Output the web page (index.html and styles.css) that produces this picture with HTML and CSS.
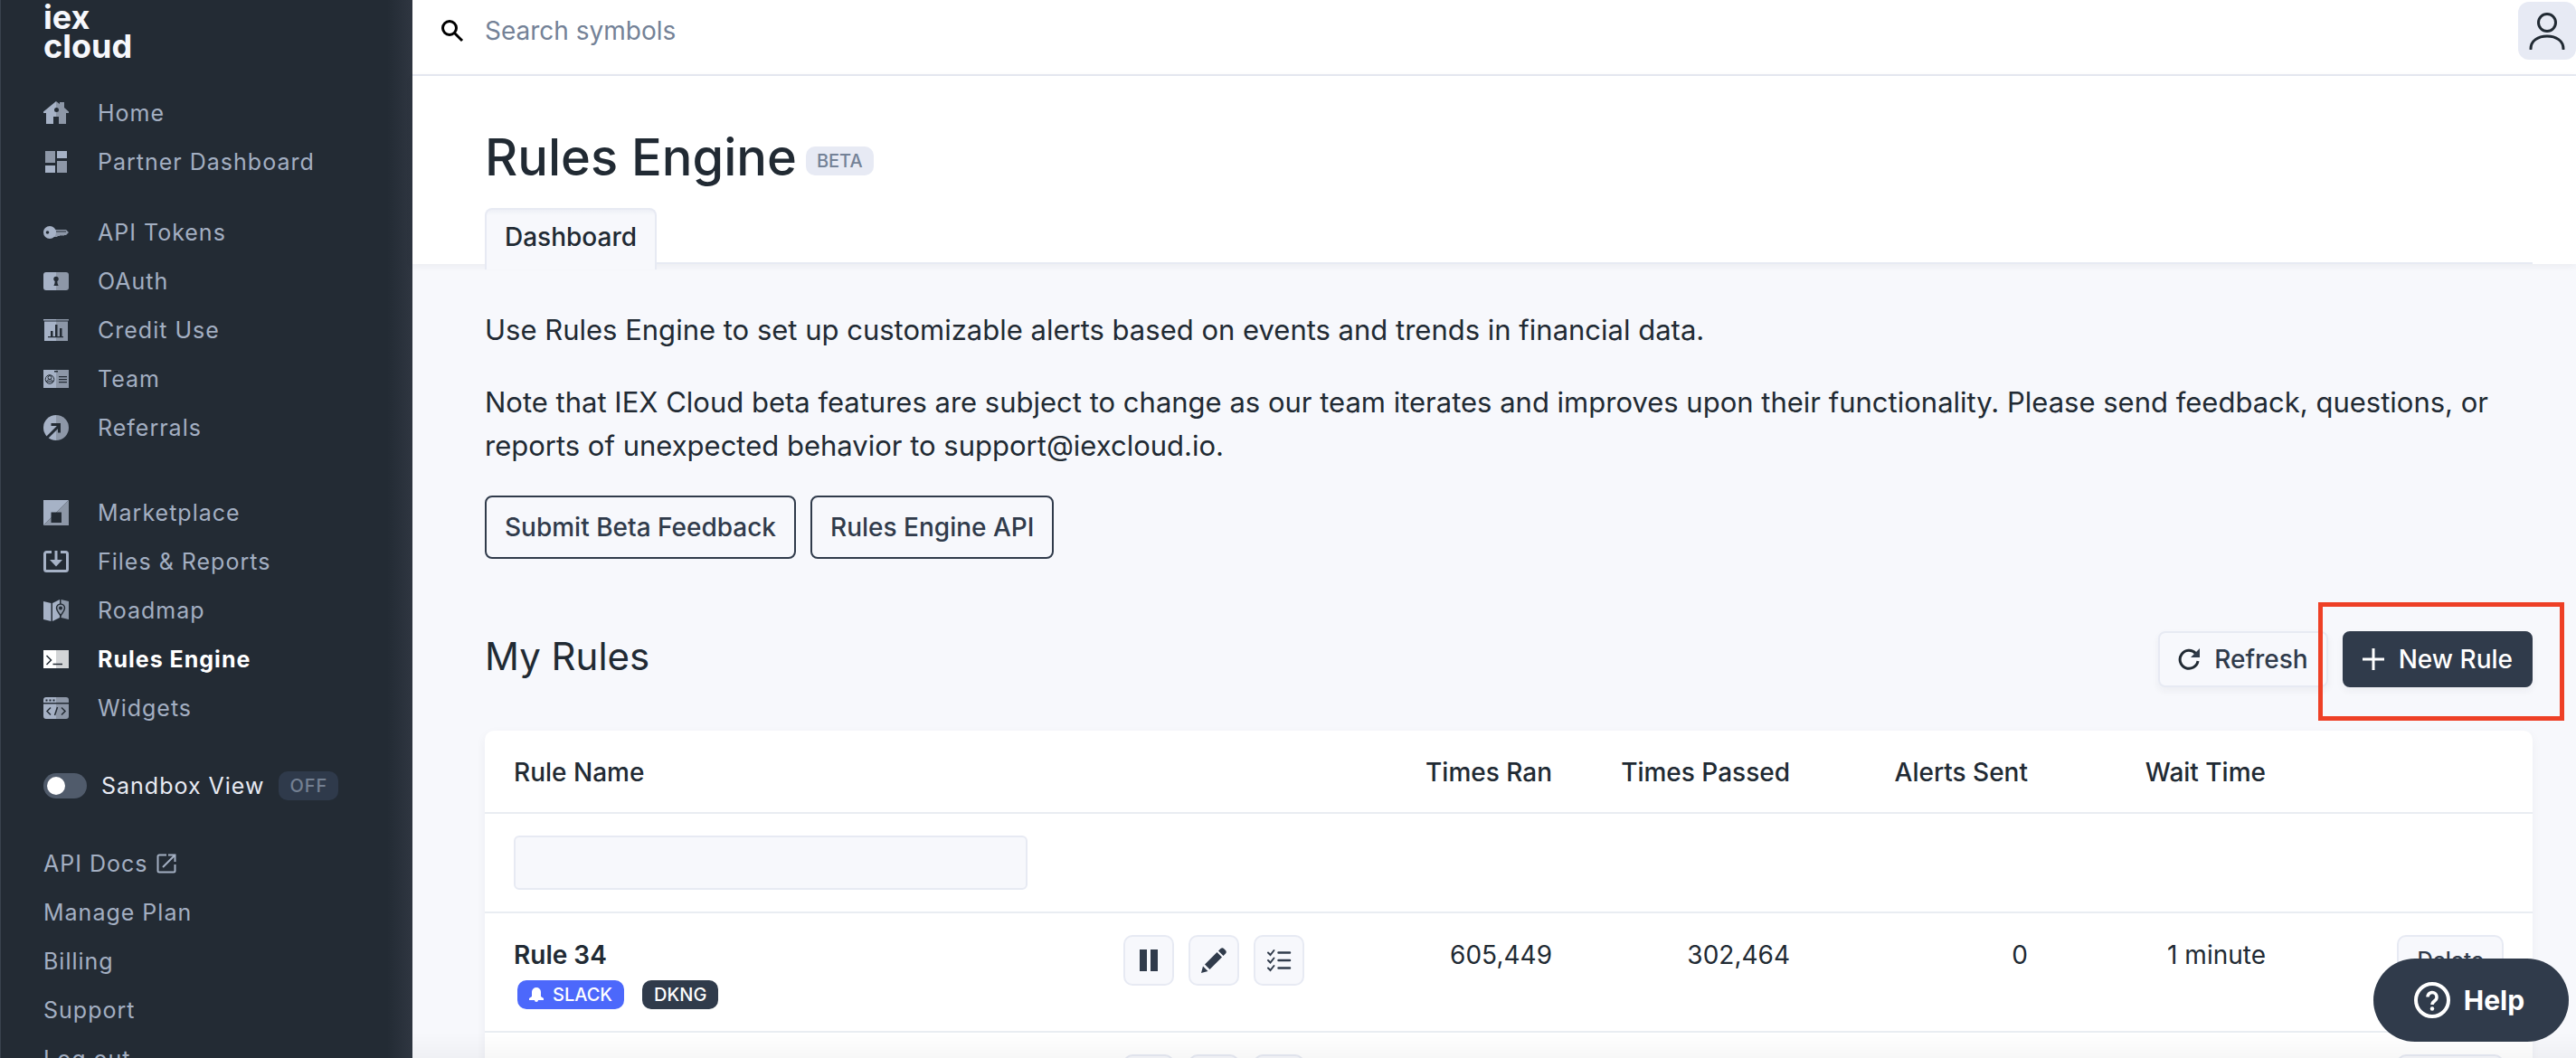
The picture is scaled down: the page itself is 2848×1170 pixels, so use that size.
FILE: index.html
```html
<!DOCTYPE html>
<html lang="en">
<head>
<meta charset="utf-8">
<title>Rules Engine - IEX Cloud</title>
<meta name="viewport" content="width=device-width, initial-scale=1">
<link rel="stylesheet" href="styles.css">
</head>
<body>
<div class="app">
  <aside class="sidebar">
    <a class="logo" href="#">iex<br>cloud</a>
    <nav class="nav" aria-label="Main">
      <ul class="nav-group">
        <li><a class="nav-link" href="#"><svg class="nav-icon" viewBox="0 0 28 28"><path class="tone-a" d="M14 1 0 12.500V14h3v12h8v-8h3z"/><path class="tone-b" d="M14 1l4 3V2h5v6l5 4.500V14h-3v12h-8v-8h-3z"/><circle class="cut" cx="14.500" cy="10.500" r="2.500"/></svg>Home</a></li>
        <li><a class="nav-link" href="#"><svg class="nav-icon" viewBox="0 0 28 28"><path class="tone-b" d="M2 2h11v13H2zM15 13h11v13H15z"/><path class="tone-a" d="M2 18h11v8H2zM15 2h11v8H15z"/></svg>Partner Dashboard</a></li>
      </ul>
      <ul class="nav-group">
        <li><a class="nav-link" href="#"><svg class="nav-icon" viewBox="0 0 28 28"><path class="tone-b" d="M12 11h13l3 3-3 3h-2l-1 1-1-1-1 1-1-1-1 1h-2l-1 1h-3z"/><circle class="tone-a" cx="7" cy="14" r="7"/><circle class="cut" cx="4.500" cy="14" r="1.800"/><path class="cut" d="M14 12.500h11v1H14z"/></svg>API Tokens</a></li>
        <li><a class="nav-link" href="#"><svg class="nav-icon" viewBox="0 0 28 28"><path class="tone-a" d="M14 4H3a3 3 0 0 0-3 3v14a3 3 0 0 0 3 3h11z"/><path class="tone-b" d="M14 4h11a3 3 0 0 1 3 3v14a3 3 0 0 1-3 3H14z"/><circle class="cut" cx="14" cy="11.500" r="2.700"/><path class="cut" d="M13 12h2l.600 4.500 1 2.500h-5.200l1-2.500z"/></svg>OAuth</a></li>
        <li><a class="nav-link" href="#"><svg class="nav-icon" viewBox="0 0 28 28"><path class="tone-a" d="M0 2h14v1.500H0zM1 4.500h13V26H1z"/><path class="tone-b" d="M14 2h14v1.500H14zM14 4.500h13V26H14z"/><path class="cut" d="M8 15h2.500v6H8zM13 8h2.500v13H13zM18 12h2.500v9H18zM5 21h17v1.200H5z"/></svg>Credit Use</a></li>
        <li><a class="nav-link" href="#"><svg class="nav-icon" viewBox="0 0 28 28"><path class="tone-a" d="M0 4h14v20H0z"/><path class="tone-b" d="M14 4h14v20H14z"/><path class="cut" d="M12 5h4v1.500h-4zM17 11h9v1.200h-9zM17 14h9v1.200h-9zM17 17h9v1.200h-9z"/><circle class="cut-line" cx="7" cy="14.500" r="4.800"/><circle class="cut-line" cx="7" cy="12.500" r="2"/><path class="cut-line" d="M3.500 17c0-3 7-3 7 0z"/></svg>Team</a></li>
        <li><a class="nav-link" href="#"><svg class="nav-icon" viewBox="0 0 28 28"><path class="tone-a" d="M14 0a14 14 0 0 0 0 28z"/><path class="tone-b" d="M14 0a14 14 0 0 1 0 28z"/><path class="cut-arrow" d="M4 25 17.500 11.500M8.500 10.500h9v9"/></svg>Referrals</a></li>
      </ul>
      <ul class="nav-group nav-group-wide">
        <li><a class="nav-link" href="#"><svg class="nav-icon" viewBox="0 0 28 28"><path class="tone-a" d="M0 0h28L0 28z"/><path class="tone-b" d="M28 0v28H0z"/><path class="cut" d="M8.500 13.500H20V25H8.500z"/></svg>Marketplace</a></li>
        <li><a class="nav-link" href="#"><svg class="nav-icon" viewBox="0 0 28 28"><path class="line-a" d="M9 3.500H3.500A2 2 0 0 0 1.500 5.500v17a2 2 0 0 0 2 2h21a2 2 0 0 0 2-2v-17a2 2 0 0 0-2-2H19M14 2v10"/><path class="tone-a" d="M7 12h14l-7 7.500z"/></svg>Files &amp; Reports</a></li>
        <li><a class="nav-link" href="#"><svg class="nav-icon" viewBox="0 0 28 28"><path class="tone-a" d="M0 4l8.500 2v20L0 24zM10 6l8-4v20l-8 4z"/><path class="tone-b" d="M19.500 2l8.500 2v20l-8.500-2z"/><path class="pin" d="M19 20c-2.500-4-4.500-6-4.500-8.500a4.500 4.500 0 0 1 9 0C23.500 14 21.500 16 19 20z"/><circle class="cut" cx="19" cy="11.500" r="2"/></svg>Roadmap</a></li>
        <li><a class="nav-link is-active" aria-current="page" href="#"><svg class="nav-icon" viewBox="0 0 28 28"><path class="tone-a" d="M0 4h14v20H0z"/><path class="tone-b" d="M14 4h14v20H14z"/><path class="cut-thick" d="M3.500 10l5 5-5 5M10.500 19.500H21"/></svg>Rules Engine</a></li>
        <li><a class="nav-link" href="#"><svg class="nav-icon" viewBox="0 0 28 28"><path class="tone-a" d="M14 2H3a3 3 0 0 0-3 3v3h14zM0 9.500h14V26H3a3 3 0 0 1-3-3z"/><path class="tone-b" d="M14 2h11a3 3 0 0 1 3 3v3H14zM14 9.500h14V23a3 3 0 0 1-3 3H14z"/><path class="cut" d="M2.500 4.500h2v2h-2zM6.500 4.500h2v2h-2zM10.500 4.500h2v2h-2z"/><path class="cut-thick" d="M8 13.500 4 17.500l4 4M20 13.500l4 4-4 4M15.500 13l-3 9"/></svg>Widgets</a></li>
      </ul>
    </nav>
    <label class="sandbox">
      <input class="switch" type="checkbox" role="switch">
      <span>Sandbox View</span>
      <span class="tag tag-dark">OFF</span>
    </label>
    <ul class="nav-group">
      <li><a class="nav-link nav-plain" href="#">API Docs <svg class="ext-icon" viewBox="0 0 22 22"><path d="M11 1.500H3a1.500 1.500 0 0 0-1.500 1.500v16A1.500 1.500 0 0 0 3 20.500h16a1.500 1.500 0 0 0 1.500-1.500v-7M13 1.500h7.500V9M20 2 7 15"/></svg></a></li>
      <li><a class="nav-link nav-plain" href="#">Manage Plan</a></li>
      <li><a class="nav-link nav-plain" href="#">Billing</a></li>
      <li><a class="nav-link nav-plain" href="#">Support</a></li>
      <li><a class="nav-link nav-plain" href="#">Log out</a></li>
    </ul>
  </aside>

  <div class="main">
    <div class="topbar">
      <label class="search">
        <svg class="search-icon" viewBox="0 0 26 26"><circle cx="10" cy="10" r="7.500"/><path d="M15.500 15.500 24 24"/></svg>
        <input class="search-input" type="search" placeholder="Search symbols" aria-label="Search symbols">
      </label>
      <button class="avatar" type="button" aria-label="Account"><svg viewBox="0 0 40 42"><circle cx="20" cy="12" r="9.500"/><path d="M2 41c0-9 8-14 18-14s18 5 18 14"/></svg></button>
    </div>

    <header class="page-head">
      <div class="title-row">
        <h1 class="title">Rules Engine</h1>
        <span class="tag">BETA</span>
      </div>
      <div class="tabs"><a class="tab" aria-current="page" href="#">Dashboard</a></div>
    </header>

    <main class="content">
      <p class="lead">Use Rules Engine to set up customizable alerts based on events and trends in financial data.</p>
      <p class="lead">Note that IEX Cloud beta features are subject to change as our team iterates and improves upon their functionality. Please send feedback, questions, or reports of unexpected behavior to support@iexcloud.io.</p>
      <div class="actions">
        <button class="btn btn-outline" type="button">Submit Beta Feedback</button>
        <button class="btn btn-outline" type="button">Rules Engine API</button>
      </div>

      <div class="section-head">
        <h2 class="subtitle">My Rules</h2>
        <div class="section-tools">
          <button class="btn btn-light" type="button"><svg class="btn-icon" viewBox="0 0 24 24"><path class="refresh-line" d="M19.500 5.500A10 10 0 1 0 22 14"/><path class="fill" d="M24 0v10H14z"/></svg>Refresh</button>
          <div class="highlight"><button class="btn btn-dark" type="button"><svg class="btn-icon" viewBox="0 0 24 24"><path class="plus-line" d="M12 0v24M0 12h24"/></svg>New Rule</button></div>
        </div>
      </div>

      <div class="card">
        <table class="rules">
          <colgroup><col><col class="col-fixed"><col class="col-fixed"><col class="col-fixed"><col class="col-fixed"><col class="col-fixed"><col class="col-fixed"></colgroup>
          <thead>
            <tr class="head-row"><th class="left" scope="col">Rule Name</th><td></td><th scope="col">Times Ran</th><th scope="col">Times Passed</th><th scope="col">Alerts Sent</th><th scope="col">Wait Time</th><td></td></tr>
            <tr><td class="left"><input class="filter" type="text" aria-label="Filter by rule name"></td><td></td><td></td><td></td><td></td><td></td><td></td></tr>
          </thead>
          <tbody>
            <tr class="rule-row">
              <td class="left">
                <div class="rule-name">Rule 34</div>
                <div class="badges">
                  <span class="badge badge-blue"><svg class="bell" viewBox="0 0 16 16"><path d="M8 0a5 5 0 0 0-5 5v5l-3 2v2h16v-2l-3-2V5a5 5 0 0 0-5-5zM6 14h4a2 2 0 0 1-4 0z"/></svg>SLACK</span>
                  <span class="badge">DKNG</span>
                </div>
              </td>
              <td class="tools-cell">
                <div class="row-tools">
                  <button class="icon-btn" type="button" aria-label="Pause"><svg viewBox="0 0 28 28"><path d="M4 2h8v24H4zM16 2h8v24h-8z"/></svg></button>
                  <button class="icon-btn" type="button" aria-label="Edit"><svg viewBox="0 0 28 28"><path d="M4 18.500 17.500 5l5.500 5.500L9.500 24zM2 20.500l5.500 5.500L0 28zM19 3.500l2.500-2.500q2-1.500 3.500 0l2 2q1.500 1.500 0 3.500L24.500 9z"/></svg></button>
                  <button class="icon-btn" type="button" aria-label="Logs"><svg viewBox="0 0 28 28"><path class="list-line" d="M13.500 5.500H26M13.500 14H26M13.500 22.500H26"/><path class="check-line" d="M2 5.500l2.500 2.500 4-5M2 14l2.500 2.500 4-5M2 22.500l2.500 2.500 4-5"/></svg></button>
                </div>
              </td>
              <td>605,449</td><td>302,464</td><td>0</td><td>1 minute</td>
              <td><button class="delete" type="button">Delete</button></td>
            </tr>
            <tr class="rule-row">
              <td class="left"></td>
              <td class="tools-cell">
                <div class="row-tools">
                  <button class="icon-btn" type="button" aria-label="Pause"></button>
                  <button class="icon-btn" type="button" aria-label="Edit"></button>
                  <button class="icon-btn" type="button" aria-label="Logs"></button>
                </div>
              </td>
              <td></td><td></td><td></td><td></td>
              <td><button class="delete delete-empty" type="button" aria-label="Delete"></button></td>
            </tr>
          </tbody>
        </table>
      </div>
    </main>
  </div>
</div>
<button class="help" type="button"><svg class="help-icon" viewBox="0 0 40 40"><circle cx="20" cy="20" r="18"/><path class="help-mark" d="M15 16.500a5 5 0 1 1 8 4c-2 1.500-3 2.500-3 4.500"/><circle class="fill" cx="20" cy="29.500" r="2.200"/></svg>Help</button>
</body>
</html>
```
FILE: styles.css
```css
* { box-sizing: border-box; }

:root {
  --ink: #212a33;
  --slate: #303b4b;
  --muted: #748297;
  --line: #e7eaf3;
  --pale: #f7f8fc;
  --side: #232b34;
}

body {
  margin: 0;
  font-family: Inter, "Liberation Sans", sans-serif;
  font-size: 28px;
  color: var(--ink);
  background: var(--pale);
}

h1, h2, p, ul { margin: 0; padding: 0; }
ul { list-style: none; }
a { color: inherit; text-decoration: none; }
button, input { font: inherit; color: inherit; }
button { cursor: pointer; }
svg { display: block; flex: none; }

.app {
  display: flex;
  height: 100vh;
  overflow: hidden;
}

/* Sidebar */
.sidebar {
  flex: none;
  width: 456px;
  padding: 3px 47px 0;
  overflow: hidden;
  color: #a3afc2;
  border-left: 1px solid #39424d;
  background: linear-gradient(to left, #2f3641, var(--side) 28px);
}

.logo {
  display: block;
  font-size: 36px;
  font-weight: 700;
  line-height: 32px;
  color: #f7f8fc;
}

.nav { margin-top: 31px; }
.nav-group + .nav-group { margin-top: 24px; }
.nav-group + .nav-group-wide { margin-top: 40px; }

.nav-link {
  display: flex;
  align-items: center;
  gap: 32px;
  height: 54px;
  font-size: 25px;
  letter-spacing: 1px;
  white-space: nowrap;
}

.nav-plain { gap: 10px; }
.nav-link.is-active { color: #fff; font-weight: 700; }

.nav-icon { width: 28px; height: 28px; }
.tone-a { fill: #a6b2c6; }
.tone-b { fill: #8d97a7; }
.is-active .tone-a { fill: #fff; }
.is-active .tone-b { fill: #d3d5d7; }
.cut { fill: var(--side); }
.cut-line, .cut-thick, .cut-arrow, .pin { fill: none; stroke: var(--side); stroke-width: 1; }
.cut-thick { stroke-width: 1.5; }
.cut-arrow { stroke-width: 3; }
.pin { stroke-width: 1.5; fill: #8d97a7; }
.line-a { fill: none; stroke: #a6b2c6; stroke-width: 3; }

.ext-icon { width: 22px; height: 22px; fill: none; stroke: #a3afc2; stroke-width: 2; }

.sandbox {
  display: flex;
  align-items: center;
  gap: 16px;
  height: 64px;
  margin: 27px 0;
  font-size: 25px;
  letter-spacing: 1px;
  color: #e7eaf3;
  white-space: nowrap;
}

.switch {
  appearance: none;
  flex: none;
  width: 48px;
  height: 28px;
  margin: 0;
  padding: 4px;
  border-radius: 14px;
  background: #505b6b;
}

.switch::before {
  content: "";
  display: block;
  width: 20px;
  height: 20px;
  border-radius: 50%;
  background: #fff;
}

.tag {
  padding: 0 12px;
  border-radius: 10px;
  font-size: 20px;
  font-weight: 500;
  line-height: 32px;
  color: var(--muted);
  background: #e7eaf4;
}

.tag-dark { background: #2f3a4b; color: #748092; }

/* Main column */
.main { flex: 1; min-width: 0; }

.topbar {
  display: flex;
  justify-content: space-between;
  height: 84px;
  padding: 2px 0 0 31px;
  border-bottom: 2px solid var(--line);
  background: #fff;
}

.search {
  display: flex;
  flex: 1;
  align-items: center;
  gap: 23px;
  height: 64px;
}

.search-icon { width: 26px; height: 26px; fill: none; stroke: #000; stroke-width: 3; }

.search-input {
  flex: 1;
  padding: 0;
  border: 0;
  outline: 0;
  background: none;
}

.search-input::placeholder { color: var(--muted); opacity: 1; }

.avatar {
  display: grid;
  place-items: center;
  width: 64px;
  height: 64px;
  padding: 0;
  border: 0;
  border-radius: 12px;
  background: #e7eaf4;
}

.avatar svg { width: 40px; height: 42px; fill: none; stroke: var(--ink); stroke-width: 3; stroke-linecap: round; }

.page-head {
  position: relative;
  padding: 58px 48px 0 80px;
  background: #fff;
  box-shadow: 0 2px 8px rgba(33, 42, 51, .06);
}

.title-row { display: flex; align-items: center; gap: 10px; height: 64px; }
.title { font-size: 56px; font-weight: 500; line-height: 64px; }
.title-row .tag { margin-top: 8px; }

.tabs { display: flex; margin-top: 24px; border-bottom: 2px solid var(--line); }

.tab {
  height: 68px;
  margin-bottom: -8px;
  padding: 0 20px;
  border: 2px solid var(--line);
  border-bottom: 0;
  border-radius: 8px 8px 0 0;
  font-weight: 500;
  line-height: 60px;
  background: linear-gradient(#eef0f6, var(--pale) 6px);
}

.content { padding: 49px 48px 0 80px; }

.lead { font-size: 31px; line-height: 48px; }
.lead + .lead { margin-top: 32px; }

.actions { display: flex; gap: 16px; margin-top: 31px; }

.btn {
  display: flex;
  align-items: center;
  gap: 16px;
  height: 62px;
  padding: 0 20px;
  border: 2px solid var(--slate);
  border-radius: 8px;
  font-weight: 500;
  color: var(--slate);
  background: var(--pale);
  white-space: nowrap;
}

.btn-outline { height: 70px; }
.btn-light { border-color: var(--line); box-shadow: 0 4px 8px rgba(33, 42, 51, .05); }
.btn-dark { color: #fff; background: var(--slate); box-shadow: 0 4px 8px rgba(33, 42, 51, .05); }
.btn-icon { width: 24px; height: 24px; fill: none; stroke: currentColor; stroke-width: 3; }
.refresh-line { stroke: var(--ink); }
.fill { fill: currentColor; stroke: none; }

.section-head {
  display: flex;
  align-items: flex-start;
  justify-content: space-between;
  margin-top: 80px;
}

.subtitle { font-size: 42px; font-weight: 400; line-height: 56px; }
.section-tools { display: flex; gap: 16px; }

/* Callout frame around the primary action */
.highlight { position: relative; }

.highlight::after {
  content: "";
  position: absolute;
  inset: -32px -35px -37px -27px;
  border: 5px solid #ee4026;
  pointer-events: none;
}

.card {
  margin-top: 48px;
  border-radius: 10px;
  background: #fff;
  box-shadow: 0 4px 12px rgba(33, 42, 51, .05);
}

.rules { width: 100%; border-collapse: collapse; table-layout: fixed; }
.col-fixed { width: 263px; }

.rules th, .rules td {
  padding: 24px 32px;
  border-bottom: 2px solid #e9edf2;
  text-align: right;
  vertical-align: top;
  font-weight: 400;
  line-height: 44px;
}

.rules th { font-weight: 500; white-space: nowrap; }
.rules .left { text-align: left; }
.rules .head-row > * { height: 91px; padding: 24px 32px 20px; }
.rules .tools-cell { padding: 24px 20px; }

.filter {
  display: block;
  width: 568px;
  max-width: 100%;
  height: 60px;
  border: 2px solid var(--line);
  border-radius: 6px;
  background: var(--pale);
}

.rule-row { height: 132px; }
.rule-name { font-weight: 600; }

.badges { display: flex; gap: 20px; margin: 6px 0 0 4px; }

.badge {
  display: flex;
  align-items: center;
  gap: 10px;
  height: 32px;
  padding: 0 13px;
  border-radius: 10px;
  font-size: 20px;
  font-weight: 500;
  line-height: 32px;
  color: #fff;
  background: var(--slate);
}

.badge-blue { background: #4c68fb; }
.bell { width: 16px; height: 16px; fill: #fff; }

.row-tools { display: flex; gap: 16px; }

.icon-btn {
  display: grid;
  flex: none;
  place-items: center;
  width: 56px;
  height: 56px;
  padding: 0;
  border: 2px solid var(--line);
  border-radius: 10px;
  background: var(--pale);
}

.icon-btn svg { width: 28px; height: 28px; fill: var(--slate); }
.icon-btn .list-line, .icon-btn .check-line { fill: none; stroke: var(--slate); stroke-width: 2.5; stroke-linecap: round; }
.icon-btn .check-line { stroke-width: 2; }

.delete {
  display: block;
  height: 56px;
  margin-left: auto;
  padding: 0 20px;
  border: 2px solid var(--line);
  border-radius: 10px;
  font-size: 24px;
  font-weight: 500;
  color: var(--slate);
  background: var(--pale);
}

.delete-empty { width: 118px; }

/* Fade along the bottom of the window */
.app::after {
  content: "";
  position: fixed;
  inset: auto 0 0 456px;
  height: 28px;
  background: linear-gradient(rgba(0, 0, 0, 0), rgba(0, 0, 0, .03));
  pointer-events: none;
}

/* Floating help launcher */
.help {
  position: fixed;
  right: 8px;
  bottom: 18px;
  display: flex;
  align-items: center;
  justify-content: center;
  gap: 15px;
  width: 216px;
  height: 92px;
  padding: 0 10px 0 6px;
  border: 0;
  border-radius: 46px;
  font-size: 30px;
  font-weight: 700;
  color: #fff;
  background: var(--slate);
}

.help-icon { width: 40px; height: 40px; fill: none; stroke: #fff; stroke-width: 4; }
.help-mark { stroke-width: 3.5; }
```
